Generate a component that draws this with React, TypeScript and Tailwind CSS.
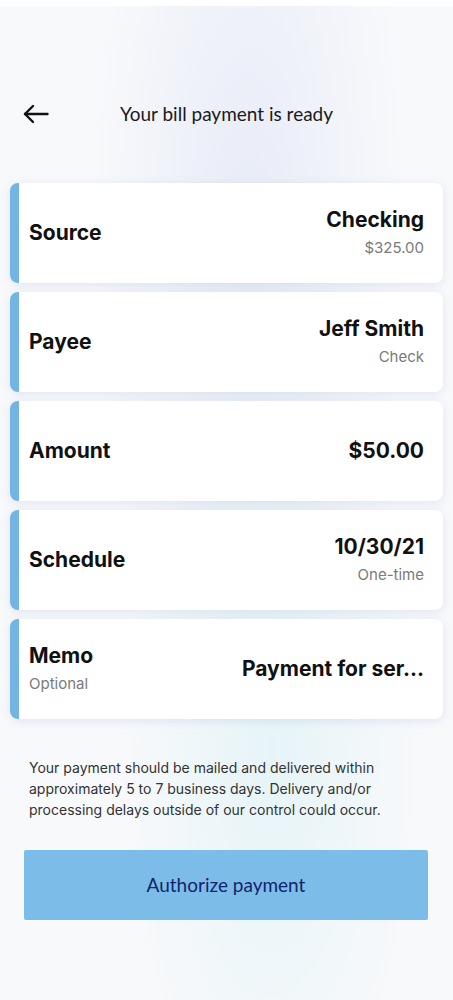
import type { ReactNode } from 'react';

interface Row {
  label: string;
  sub?: string;
  value: string;
  detail?: string;
}

const rows: Row[] = [
  { label: 'Source', value: 'Checking', detail: '$325.00' },
  { label: 'Payee', value: 'Jeff Smith', detail: 'Check' },
  { label: 'Amount', value: '$50.00' },
  { label: 'Schedule', value: '10/30/21', detail: 'One-time' },
  { label: 'Memo', sub: 'Optional', value: 'Payment for ser...' },
];

const bodyFont = { fontFamily: '"Inter", "Liberation Sans", sans-serif' };

function Card({ children }: { children: ReactNode }) {
  return (
    <div className="flex h-[100px] overflow-hidden rounded-lg bg-white shadow-[0_2px_10px_rgba(120,140,190,0.18)]">
      <div className="w-[9px] shrink-0 bg-[#72b4e3]" />
      <div className="flex flex-1 items-center justify-between pl-[10px] pr-[19px]">{children}</div>
    </div>
  );
}

export default function App() {
  return (
    <div
      className="min-h-[1000px] w-full border-t-[6px] border-white bg-[#f8f9fb] bg-[radial-gradient(ellipse_at_55%_22%,rgba(215,222,245,0.5),transparent_45%),radial-gradient(ellipse_at_60%_75%,rgba(215,240,245,0.55),transparent_40%)] text-[#111]"
      style={{ fontFamily: '"Lato", "Liberation Sans", sans-serif' }}
    >
      {/* Header */}
      <div className="relative mt-[88px] flex h-[40px] items-center justify-center">
        <button className="absolute left-[23px] top-[10px]">
          <svg width="26" height="20" viewBox="0 0 26 20" fill="none" stroke="#111" strokeWidth="2.4" strokeLinecap="round" strokeLinejoin="round">
            <path d="M24.5 10H2" />
            <path d="M10 2L2 10L10 18" />
          </svg>
        </button>
        <h1 className="text-[19px] text-[#1a1a1a]">Your bill payment is ready</h1>
      </div>

      {/* Details */}
      <div className="mt-[49px] flex flex-col gap-[9px] px-[10px]" style={bodyFont}>
        {rows.map((row) => (
          <Card key={row.label}>
            <div className="flex flex-col">
              <span className="text-[21px] font-bold leading-[28px]">{row.label}</span>
              {row.sub && <span className="mt-[3px] text-[15px] text-[#7a7a7a]">{row.sub}</span>}
            </div>
            <div className="flex flex-col items-end">
              <span className="text-[21px] font-bold leading-[28px]">{row.value}</span>
              {row.detail && <span className="mt-[3px] text-[15px] text-[#7a7a7a]">{row.detail}</span>}
            </div>
          </Card>
        ))}
      </div>

      {/* Disclaimer */}
      <p className="mt-[38px] px-[29px] text-[14px] leading-[21px] text-[#333]" style={bodyFont}>
        Your payment should be mailed and delivered within approximately 5 to 7 business days. Delivery and/or
        processing delays outside of our control could occur.
      </p>

      <div className="mt-[30px] pl-[24px] pr-[25px]">
        <button className="flex h-[70px] w-full items-center justify-center rounded-[2px] bg-[#7bbde8] text-[19px] text-[#14236b]">
          Authorize payment
        </button>
      </div>
    </div>
  );
}
